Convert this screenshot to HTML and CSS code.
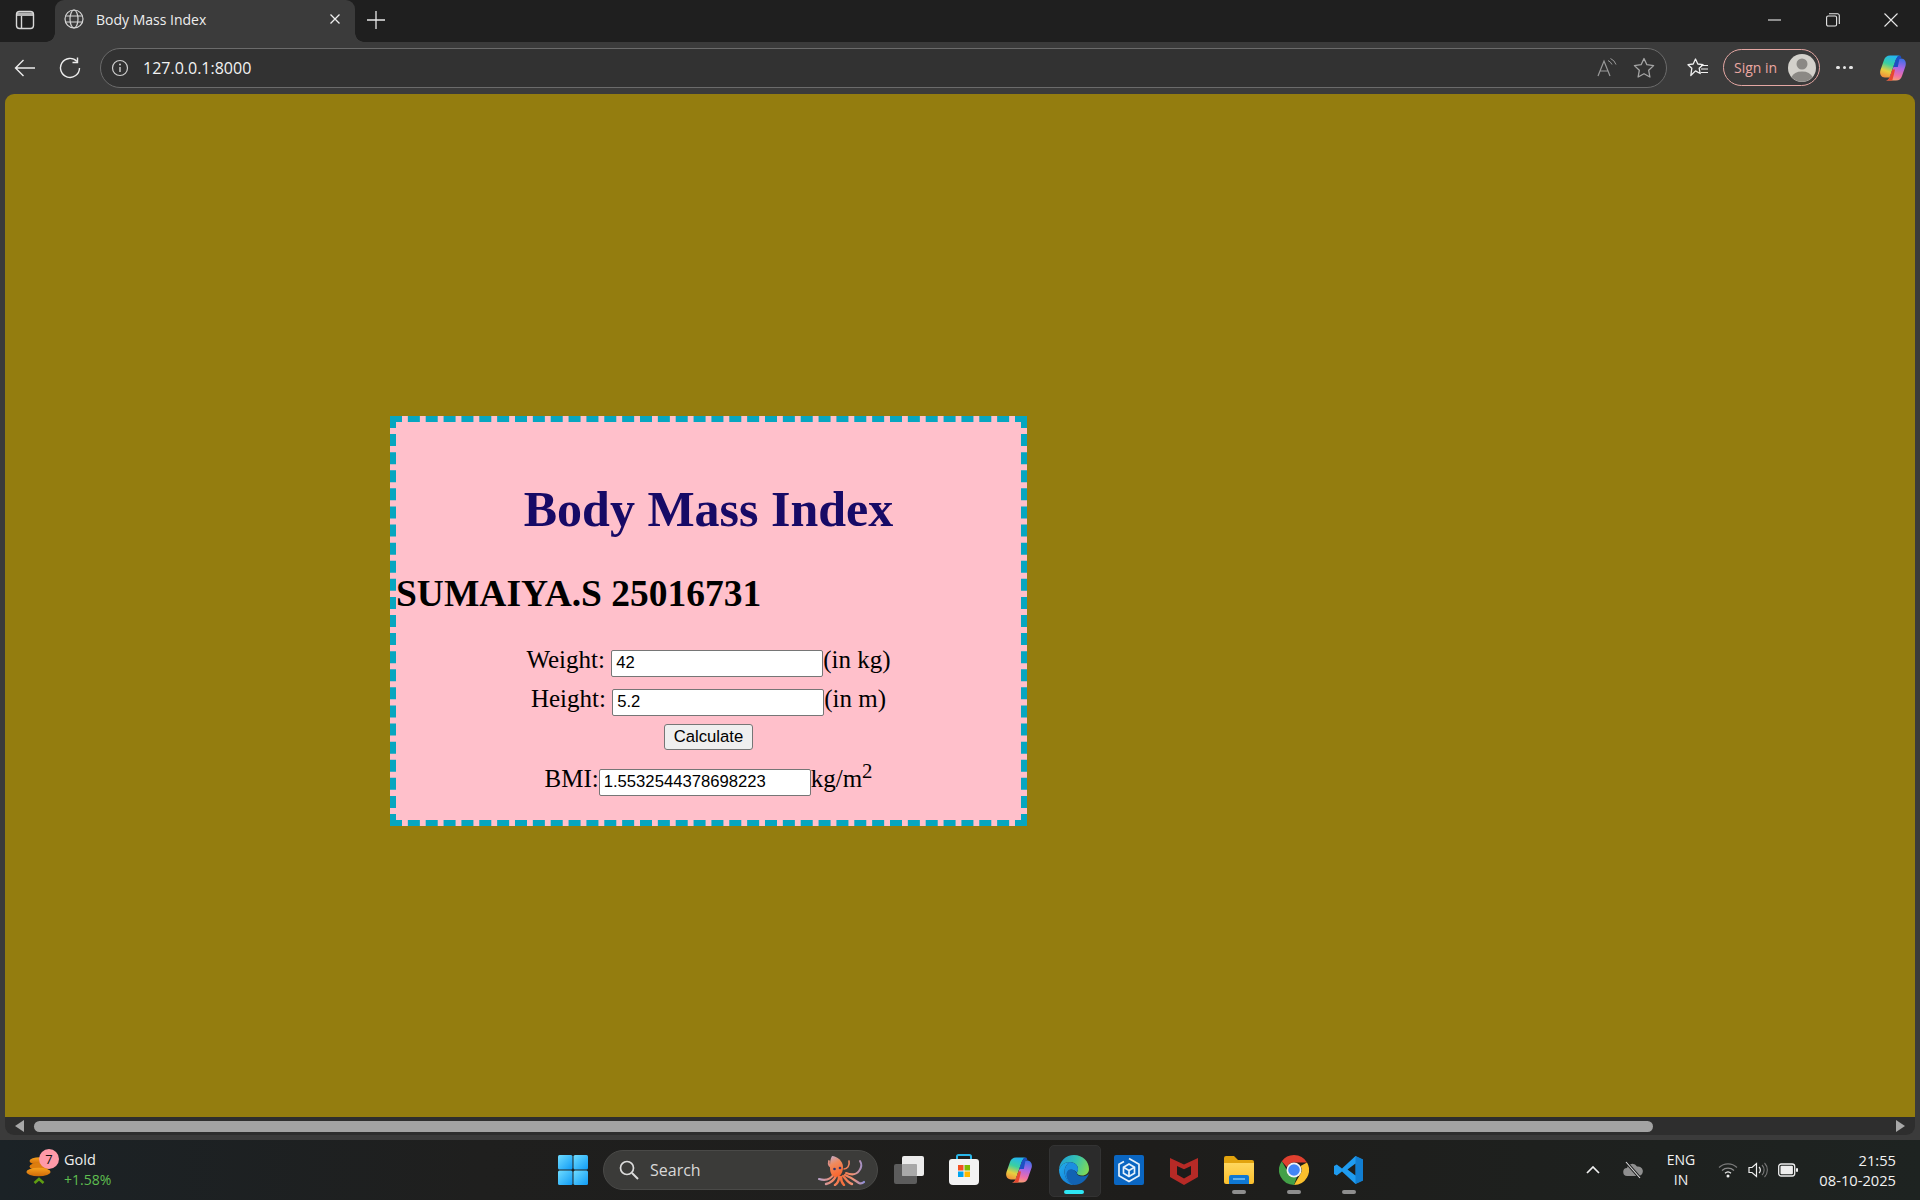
FILE: index.html
```html
<!DOCTYPE html>
<html lang="en">
<head>
<meta charset="utf-8">
<title>Body Mass Index</title>
<link rel="stylesheet" href="styles.css">
</head>
<body>
<svg class="defs" width="0" height="0" aria-hidden="true">
  <defs>
    <linearGradient id="copA" x1="0.6" y1="0" x2="0.3" y2="1"><stop offset="0" stop-color="#23b4f2"/><stop offset=".4" stop-color="#3ad0a0"/><stop offset=".72" stop-color="#e8cf3f"/><stop offset="1" stop-color="#f2913a"/></linearGradient>
    <linearGradient id="copB" x1="0.6" y1="0" x2="0.4" y2="1"><stop offset="0" stop-color="#3f6fe6"/><stop offset=".4" stop-color="#ac66e4"/><stop offset=".75" stop-color="#ee6fa6"/><stop offset="1" stop-color="#f8a271"/></linearGradient>
    <linearGradient id="winG" x1="0" y1="0" x2="1" y2="1"><stop offset="0" stop-color="#6fdcff"/><stop offset="1" stop-color="#0f9bf5"/></linearGradient>
    <linearGradient id="edgeA" x1="0" y1="0.3" x2="1" y2="0.6"><stop offset="0" stop-color="#1f9fd8"/><stop offset=".5" stop-color="#35c1b1"/><stop offset="1" stop-color="#7ed957"/></linearGradient>
    <linearGradient id="edgeB" x1="0" y1="0" x2="0.6" y2="1"><stop offset="0" stop-color="#22b0ee"/><stop offset="1" stop-color="#1680d8"/></linearGradient>
    <linearGradient id="coin" x1="0" y1="0" x2="0" y2="1"><stop offset="0" stop-color="#f7a11e"/><stop offset="1" stop-color="#cf6a08"/></linearGradient>
    <linearGradient id="folderG" x1="0" y1="0" x2="0" y2="1"><stop offset="0" stop-color="#ffd75e"/><stop offset="1" stop-color="#fbbf2c"/></linearGradient>
    <linearGradient id="armL" gradientUnits="userSpaceOnUse" x1="2" y1="0" x2="22" y2="0"><stop offset="0" stop-color="#b9a0c4"/><stop offset=".6" stop-color="#f08a6c"/><stop offset="1" stop-color="#f5713f"/></linearGradient>
    <linearGradient id="armR" gradientUnits="userSpaceOnUse" x1="46" y1="0" x2="24" y2="0"><stop offset="0" stop-color="#8f8fd8"/><stop offset=".5" stop-color="#f0947a"/><stop offset="1" stop-color="#f5713f"/></linearGradient>
    <linearGradient id="octoHead" gradientUnits="userSpaceOnUse" x1="13" y1="1" x2="22" y2="20"><stop offset="0" stop-color="#c3a9c6"/><stop offset=".4" stop-color="#f08a5c"/><stop offset="1" stop-color="#f9662f"/></linearGradient>
    <g id="copilotIcon">
      <path d="M11 1.500c-3 0-5 1.500-6 4.500L1.500 16c-1.300 4 .8 7.500 4.500 7.500h4.500L16 8c1-3 2.500-6.500 5-6.500z" fill="url(#copA)"/>
      <path d="M17 26.500c3 0 5-1.500 6-4.500l3.500-10c1.300-4-.8-7.500-4.500-7.500h-4.500L12 20c-1 3-2.500 6.500-5 6.500z" fill="url(#copB)"/>
      <path d="M21 1.500c-2.500 0-4 3.500-5 6.500l-1.700 5h4.500L20.500 4.500h2c-.4-1.800-1-3-1.500-3z" fill="#1d4fc4"/>
      <path d="M7 26.500c2.500 0 4-3.500 5-6.500l1.300-4.500h2.700L15 20c-.8 2.800-1.500 6.500-2 6.500z" fill="#e8472f"/>
    </g>
  </defs>
</svg>
<div class="screen">
  <header class="tabstrip">
    <svg class="ts-side" viewBox="0 0 20 20" width="20" height="20"><rect x="1.500" y="1.500" width="17" height="17" rx="3" fill="none" stroke="#d8d8d8" stroke-width="1.400"/><path d="M2 2.500h16v3.500H2z" fill="#d8d8d8" opacity=".8"/><path d="M6.500 6v12.500" fill="none" stroke="#d8d8d8" stroke-width="1.400"/></svg>
    <div class="tab">
      <svg viewBox="0 0 20 20" width="20" height="20"><g fill="none" stroke="#d5d5d5" stroke-width="1.200"><circle cx="10" cy="10" r="9"/><ellipse cx="10" cy="10" rx="4" ry="9"/><path d="M1.500 7h17M1.500 13h17"/></g></svg>
      <span class="tab-title">Body Mass Index</span>
      <svg class="tab-close" viewBox="0 0 12 12" width="12" height="12"><path d="M1.500 1.500l9 9M10.500 1.500l-9 9" stroke="#f0f0f0" stroke-width="1.300" fill="none"/></svg>
    </div>
    <svg class="ts-new" viewBox="0 0 18 18" width="18" height="18"><path d="M9 0v18M0 9h18" stroke="#e8e8e8" stroke-width="1.300" fill="none"/></svg>
    <div class="winctl">
      <svg viewBox="0 0 14 14" width="14" height="14"><path d="M0 7h13" stroke="#e8e8e8" stroke-width="1.100"/></svg>
      <svg viewBox="0 0 14 14" width="14" height="14"><rect x=".6" y="3" width="10" height="10" rx="1.500" fill="none" stroke="#e8e8e8" stroke-width="1.100"/><path d="M3 .8h8.500a1.800 1.800 0 0 1 1.800 1.800V11" fill="none" stroke="#e8e8e8" stroke-width="1.100"/></svg>
      <svg viewBox="0 0 14 14" width="14" height="14"><path d="M.5.500l13 13M13.500.5l-13 13" stroke="#e8e8e8" stroke-width="1.100" fill="none"/></svg>
    </div>
  </header>

  <nav class="toolbar">
    <svg class="tb-back" viewBox="0 0 22 18" width="22" height="18"><path d="M21 9H1.500M9.500 1L1.500 9l8 8" fill="none" stroke="#ececec" stroke-width="1.400"/></svg>
    <svg class="tb-reload" viewBox="0 0 22 22" width="22" height="22"><path d="M18 4.500A9.500 9.500 0 1 0 20.500 11" fill="none" stroke="#ececec" stroke-width="1.400"/><path d="M18.500 0.500v5h-5" fill="none" stroke="#ececec" stroke-width="1.400"/></svg>
    <div class="addr">
      <svg viewBox="0 0 18 18" width="18" height="18"><circle cx="9" cy="9" r="7.500" fill="none" stroke="#cfcfcf" stroke-width="1.200"/><path d="M9 8v5" stroke="#cfcfcf" stroke-width="1.400"/><circle cx="9" cy="5.500" r="1" fill="#cfcfcf"/></svg>
      <span class="addr-url">127.0.0.1:8000</span>
      <svg class="addr-read" viewBox="0 0 20 20" width="20" height="20"><path d="M1 18L7 3l6 15M3.300 13h7.500" fill="none" stroke="#9a9a9a" stroke-width="1.200"/><path d="M11 2.500a8 8 0 0 1 4 4M13.500 0.500a10 10 0 0 1 5.500 6" fill="none" stroke="#9a9a9a" stroke-width="1"/></svg>
      <svg class="addr-star" viewBox="0 0 22 22" width="22" height="22"><path d="M11 1.500l2.900 6.200 6.700.9-4.900 4.700 1.200 6.700-5.900-3.300-5.900 3.300 1.200-6.700-4.900-4.700 6.700-.9z" fill="none" stroke="#a5a5a5" stroke-width="1.300" stroke-linejoin="round"/></svg>
    </div>
    <svg class="tb-fav" viewBox="0 0 22 20" width="22" height="20"><path d="M8.500 1l2.300 5 5.200.7-3.800 3.600 1 5.200-4.700-2.600-4.700 4.600 1-7.200L1 6.700 6.200 6z" fill="none" stroke="#f0f0f0" stroke-width="1.300" stroke-linejoin="round"/><path d="M14 7.500h7M14 11h7M14 14.500h7" stroke="#f0f0f0" stroke-width="1.200"/></svg>
    <div class="signin">
      <span>Sign in</span>
      <svg viewBox="0 0 28 28" width="28" height="28"><circle cx="14" cy="14" r="14" fill="#d3d1cb"/><circle cx="14" cy="10" r="5.500" fill="#8b8985"/><path d="M3.500 23a11 8 0 0 1 21 0a14 14 0 0 1-21 0z" fill="#8b8985"/></svg>
    </div>
    <div class="more"><i></i><i></i><i></i></div>
    <svg class="tb-copilot" viewBox="0 0 28 28" width="28" height="28"><use href="#copilotIcon"/></svg>
  </nav>

  <div class="frame">
    <main class="viewport">
      <section class="card">
        <h1>Body Mass Index</h1>
        <h2>SUMAIYA.S 25016731</h2>
        <form class="bmi-form">
          <div class="row">Weight: <input type="text" value="42" class="field">(in kg)</div>
          <div class="row">Height: <input type="text" value="5.2" class="field">(in m)</div>
          <div class="row row-btn"><button type="button" class="calc">Calculate</button></div>
          <div class="row row-bmi">BMI:<input type="text" value="1.5532544378698223" class="field">kg/m<sup>2</sup></div>
        </form>
      </section>
    </main>
    <div class="hscroll">
      <span class="arrow arrow-l"></span>
      <div class="track"><div class="thumb"></div></div>
      <span class="arrow arrow-r"></span>
    </div>
  </div>

  <footer class="taskbar">
    <div class="widget">
      <div class="widget-icon">
        <svg viewBox="0 0 26 32" width="26" height="32">
          <ellipse cx="14" cy="6" rx="10.500" ry="3.800" fill="url(#coin)"/>
          <ellipse cx="14" cy="11.500" rx="10.500" ry="3.800" fill="#dd7d0e"/>
          <ellipse cx="12.500" cy="17" rx="12" ry="4.200" fill="url(#coin)"/>
          <path d="M8.500 28l4.500-4 4.500 4" fill="none" stroke="#5f9d12" stroke-width="2.600"/>
        </svg>
        <span class="badge">7</span>
      </div>
      <div class="widget-text">
        <span class="w-name">Gold</span>
        <span class="w-val">+1.58%</span>
      </div>
    </div>

    <div class="tb-item">
      <svg viewBox="0 0 30 30" width="30" height="30"><g fill="url(#winG)"><rect x="0" y="0" width="14.500" height="14.500" rx="1.500"/><rect x="15.500" y="0" width="14.500" height="14.500" rx="1.500"/><rect x="0" y="15.500" width="14.500" height="14.500" rx="1.500"/><rect x="15.500" y="15.500" width="14.500" height="14.500" rx="1.500"/></g></svg>
    </div>

    <div class="search">
      <svg viewBox="0 0 20 20" width="20" height="20"><circle cx="8" cy="8" r="6.500" fill="none" stroke="#dcdcdc" stroke-width="1.700"/><path d="M13 13l6 6" stroke="#dcdcdc" stroke-width="2"/></svg>
      <span>Search</span>
      <svg class="octo" viewBox="0 0 47 31" width="47" height="31">
        <g fill="none" stroke-linecap="round" stroke="url(#armR)">
          <path d="M26 14c3 0 6-3 5-8" stroke-width="1.600"/>
          <path d="M28 18c5 2 10 2 13-2s3-7 1-10" stroke-width="2"/>
          <path d="M27 20c5 2 10 5 14 8 2 1 4 0 5-1" stroke-width="2.200"/>
          <path d="M25 21c3 3 5 7 9 8" stroke-width="2.400"/>
        </g>
        <g fill="none" stroke-linecap="round" stroke="url(#armL)">
          <path d="M15 13c-3-1-5-3-4-7" stroke-width="1.800"/>
          <path d="M16 19c-3 5-8 7-15 5" stroke-width="2.200"/>
          <path d="M18 21c-2 4-5 7-10 8" stroke-width="2.400"/>
          <path d="M21 22c0 3-1 6-4 8" stroke-width="2.400"/>
          <path d="M23 22c0 3 1 6 3 8" stroke-width="2.400"/>
        </g>
        <path d="M14 1c5 0 11 5 11 11 0 6-3 10-7 10s-6-4-6-9c0-5 0-9 2-12z" fill="url(#octoHead)"/>
        <circle cx="16.500" cy="14" r="1.300" fill="#35356a"/><circle cx="22" cy="13" r="1.300" fill="#35356a"/>
      </svg>
    </div>

    <div class="tb-item">
      <svg viewBox="0 0 30 28" width="30" height="28"><rect x="0" y="8" width="23" height="20" rx="2" fill="#5c5c5c"/><rect x="8" y="0" width="22" height="20" rx="2" fill="#ececec"/><rect x="8" y="8" width="15" height="12" rx="1" fill="#a9a9a9"/></svg>
    </div>
    <div class="tb-item">
      <svg viewBox="0 0 30 32" width="30" height="32"><path d="M8 6V2.500a1.500 1.500 0 0 1 1.500-1.500h11A1.500 1.500 0 0 1 22 2.500V6" fill="none" stroke="#29b6e8" stroke-width="2"/><path d="M0 8a3 3 0 0 1 3-3h24a3 3 0 0 1 3 3v19a4 4 0 0 1-4 4H4a4 4 0 0 1-4-4z" fill="#f3f3f3"/><rect x="9" y="11" width="5.500" height="5.500" fill="#f25022"/><rect x="15.500" y="11" width="5.500" height="5.500" fill="#7fba00"/><rect x="9" y="17.500" width="5.500" height="5.500" fill="#00a4ef"/><rect x="15.500" y="17.500" width="5.500" height="5.500" fill="#ffb900"/></svg>
    </div>
    <div class="tb-item">
      <svg viewBox="0 0 28 28" width="28" height="28"><use href="#copilotIcon"/></svg>
    </div>
    <div class="tb-item tb-active">
      <svg viewBox="0 0 32 32" width="32" height="32">
        <path d="M1 15.500C1.500 7 8 1 16 1c9 0 15 6.500 15 14 0 4-3 6.500-7 6.500-3 0-5-1-5-2.800 0-1 1-1.700 1-3.700 0-4-3.700-7-8.500-7C7 8 3 11 1 15.500z" fill="url(#edgeA)"/>
        <path d="M1 15.500C3 11 7 8 11.500 8c-3 2.500-5 5.500-5 9.500 0 6 4 11.500 9.500 13.500C7.500 31 .8 24 1 15.500z" fill="url(#edgeB)"/>
        <path d="M6.500 17.500C6.500 13.500 8.500 10.500 11.500 8c4.800 0 8.500 3 8.500 7 0 2-1 2.700-1 3.700-3.500-4-8-3.500-9.500-.2-1.500 4 1 9.500 6.500 12.500C10.500 29 6.500 23.500 6.500 17.500z" fill="#1b8fe0"/>
        <path d="M10.500 16c2.500-1.500 6-.5 8.200 3 .3 2.300 3.300 3.700 6.800 3.300 2.500-.3 4.500-1.300 5.500-2.800-2 6-7.500 11.500-15 11.500-6-2.500-9-9-7-13 .3-.8.800-1.500 1.500-2z" fill="#1263b3"/>
      </svg>
      <i class="run run-on"></i>
    </div>
    <div class="tb-item">
      <svg viewBox="0 0 30 30" width="30" height="30"><rect width="30" height="30" rx="2" fill="#0a66c2"/><g fill="none" stroke="#e6f1fb" stroke-width="1.700"><path d="M15 3.500l10 5.800v11.400L15 26.500 5 20.700V9.300l5-2.900"/><path d="M15 9l5.500 3.200v6L15 21.400l-5.500-3.200v-6z"/><path d="M9.500 12.200L15 15.400l5.500-3.200M15 15.400v6"/></g></svg>
    </div>
    <div class="tb-item">
      <svg viewBox="0 0 28 30" width="28" height="30"><path d="M0 3l14 6.500L28 3v19l-14 8-14-8z" fill="#b62a26"/><path d="M7 11l7 3.300 7-3.300v8.500l-7 4-7-4z" fill="#1c1b1a"/></svg>
    </div>
    <div class="tb-item">
      <svg viewBox="0 0 30 28" width="30" height="28"><path d="M0 2a2 2 0 0 1 2-2h8l4 4h14a2 2 0 0 1 2 2v2H0z" fill="#e2a30d"/><path d="M0 7h30v19a2 2 0 0 1-2 2H2a2 2 0 0 1-2-2z" fill="url(#folderG)"/><path d="M5 28v-7a2 2 0 0 1 2-2h16a2 2 0 0 1 2 2v7z" fill="#0f78d4"/><path d="M9 23h12" stroke="#7fc4f5" stroke-width="1.500"/></svg>
      <i class="run"></i>
    </div>
    <div class="tb-item">
      <svg viewBox="0 0 30 30" width="30" height="30"><path d="M15 0a15 15 0 0 1 13 7.500H15a7.500 7.500 0 0 0-7 4.800L2.800 6.300A15 15 0 0 1 15 0z" fill="#e0402f"/><path d="M28 7.500A15 15 0 0 1 15 30l6.500-11.200A7.500 7.500 0 0 0 21.500 11z" fill="#fbc02d"/><path d="M15 30A15 15 0 0 1 2.800 6.300L9.400 17.800a7.500 7.500 0 0 0 8.600 4z" fill="#43a047"/><circle cx="15" cy="15" r="7.500" fill="#f1f3f4"/><circle cx="15" cy="15" r="5.800" fill="#4285f4"/></svg>
      <i class="run"></i>
    </div>
    <div class="tb-item">
      <svg viewBox="0 0 30 30" width="30" height="30"><path d="M21.500 1L29 4.500v21L21.500 29 8 16.500 2.800 20.500 0 19V11l2.800-1.500L8 13.500zM21.500 8.500l-8 6 8 6z" fill="#1f9cf0"/><path d="M21.500 1L29 4.500v21L21.500 29z" fill="#0a6fc0" opacity=".65"/></svg>
      <i class="run"></i>
    </div>

    <div class="tray">
      <svg class="tr-chev" viewBox="0 0 14 8" width="14" height="8"><path d="M1 7l6-6 6 6" fill="none" stroke="#f0f0f0" stroke-width="1.700"/></svg>
      <svg class="tr-cloud" viewBox="0 0 20 18" width="20" height="18"><path d="M4.500 15a4 4 0 0 1-.5-8 5.500 5.500 0 0 1 10-1.500 4.500 4.500 0 0 1 2 9.500z" fill="#8f8f8f"/><path d="M3 1l14 16" stroke="#1f2020" stroke-width="3"/><path d="M3 1l14 16" stroke="#e0e0e0" stroke-width="1.100"/></svg>
      <div class="lang"><span>ENG</span><span>IN</span></div>
      <svg class="tr-wifi" viewBox="0 0 20 16" width="20" height="16"><path d="M1 5.500a13 13 0 0 1 18 0" fill="none" stroke="#7a7a7a" stroke-width="1.200"/><path d="M4 8.500a9 9 0 0 1 12 0" fill="none" stroke="#8a8a8a" stroke-width="1.200"/><path d="M7 11.300a4.500 4.500 0 0 1 6 0" fill="none" stroke="#eee" stroke-width="1.200"/><circle cx="10" cy="14" r="1.500" fill="#eee"/></svg>
      <svg class="tr-vol" viewBox="0 0 20 16" width="20" height="16"><path d="M1 5.500h3L8.500 1.500v13L4 10.500H1z" fill="none" stroke="#eee" stroke-width="1.200"/><path d="M11 5a4 4 0 0 1 0 6" fill="none" stroke="#eee" stroke-width="1.200"/><path d="M14 3a7 7 0 0 1 0 10M16.500 1a10 10 0 0 1 0 14" fill="none" stroke="#777" stroke-width="1.100"/></svg>
      <svg class="tr-bat" viewBox="0 0 20 14" width="20" height="14"><rect x=".7" y="1" width="16" height="12" rx="2.500" fill="none" stroke="#eee" stroke-width="1.300"/><rect x="2.500" y="2.800" width="12.400" height="8.400" rx="1" fill="#eee"/><rect x="18" y="5" width="2" height="4" rx="1" fill="#eee"/></svg>
      <div class="clock"><span>21:55</span><span>08-10-2025</span></div>
    </div>
  </footer>
</div>
</body>
</html>
```
FILE: styles.css
```css
* { box-sizing: border-box; }
html, body { margin: 0; height: 100%; overflow: hidden; }
body { background: #1f1f1f; font-family: "Open Sans", "Noto Sans", sans-serif; }
.defs { position: absolute; }
.screen { width: 1920px; height: 1200px; display: flex; flex-direction: column; }
svg { display: block; flex: none; }

/* tab strip */
.tabstrip { height: 42px; flex: none; background: #1f1f1f; display: flex; align-items: center; padding-left: 15px; padding-bottom: 2px; }
.tab { width: 300px; height: 42px; margin: 0 0 0 20px; background: #3b3b3b; border-radius: 9px 9px 0 0; display: flex; align-items: center; padding: 0 14px 4px 9px; position: relative; align-self: flex-start; }
.tab::before, .tab::after { content: ""; position: absolute; bottom: 0; width: 9px; height: 9px; }
.tab::before { left: -9px; background: radial-gradient(circle at 0 0, transparent 8.500px, #3b3b3b 9px); }
.tab::after { right: -9px; background: radial-gradient(circle at 100% 0, transparent 8.500px, #3b3b3b 9px); }
.tab-title { margin-left: 12px; font-size: 14px; color: #eee; flex: 1; }
.ts-new { margin-left: 12px; }
.winctl { margin-left: auto; display: flex; gap: 44px; padding-right: 22px; }

/* toolbar */
.toolbar { height: 52px; flex: none; background: #3b3b3b; display: flex; align-items: center; padding: 0 13px 1px 14px; }
.tb-reload { margin-left: 23px; }
.addr { width: 1567px; height: 40px; margin-left: 19px; border: 1px solid #6b6b6b; border-radius: 20px; background: #323232; display: flex; align-items: center; padding: 0 11px 0 10px; }
.addr-url { margin-left: 14px; font-size: 16px; color: #f2f2f2; flex: 1; }
.addr-star { margin-left: 16px; }
.tb-fav { margin-left: 20px; }
.signin { width: 97px; height: 37px; margin-left: 14px; border: 1.500px solid #e4a7a3; border-radius: 19px; display: flex; align-items: center; justify-content: space-between; padding: 0 3px 0 10px; color: #eaa7a2; font-size: 14px; }
.more { display: flex; gap: 3px; margin-left: 16px; }
.more i { width: 3.500px; height: 3.500px; border-radius: 50%; background: #e6e6e6; }
.tb-copilot { margin-left: 26px; }

/* browser content */
.frame { flex: 1; min-height: 0; background: #3b3b3b; padding: 0 5px 5px; display: flex; flex-direction: column; }
.viewport { flex: 1; min-height: 0; background: #947d0f; border-radius: 9px 9px 0 0; padding: 322px 0 0 385px; overflow: hidden; }
.hscroll { height: 18px; flex: none; background: #2e2e2e; border-radius: 0 0 9px 9px; display: flex; align-items: center; padding: 0 10px; }
.track { flex: 1; margin: 0 10px 0 10px; height: 11px; }
.thumb { width: 1619px; height: 11px; background: #a3a3a3; border-radius: 6px; }
.arrow { width: 0; height: 0; border-top: 6px solid transparent; border-bottom: 6px solid transparent; }
.arrow-l { border-right: 9px solid #a8a8a8; }
.arrow-r { border-left: 9px solid #a8a8a8; }

/* card */
.card { width: 637px; height: 410px; border: 6px dashed #06a6c0; background: #ffc0cb; padding-top: 25px; font-family: "Liberation Serif", "Times New Roman", serif; font-size: 25px; color: #000; }
.card h1 { margin: 33px 0 34px; font-size: 50px; line-height: 58px; color: #170a66; text-align: center; }
.card h2 { margin: 0 0 30px; font-size: 37.500px; line-height: 43px; }
.row { height: 39px; line-height: 29px; text-align: center; white-space: nowrap; }
.row-btn { height: 43px; line-height: 26px; margin-top: -2px; }
.row-bmi { margin-top: 0; }
.field { width: 212px; height: 27px; padding: 1px 4px; border: 1px solid #767676; border-radius: 2px; background: #fff; font: 16.670px "Liberation Sans", Arial, sans-serif; color: #000; vertical-align: baseline; outline: none; }
.calc { width: 89px; height: 26px; padding: 0; border: 1px solid #767676; border-radius: 3px; background: #efefef; font: 16.670px "Liberation Sans", Arial, sans-serif; color: #000; }
.row sup { font-size: 20.800px; line-height: 0; }

/* taskbar */
.taskbar { height: 60px; flex: none; display: flex; align-items: center; background: linear-gradient(90deg, #1b2226 0%, #1f1f1e 25%, #1e1d1b 60%, #1e2321 100%); }
.widget { width: 545px; flex: none; display: flex; align-items: center; padding-left: 26px; }
.widget-icon { position: relative; width: 26px; height: 32px; margin-top: 2px; }
.badge { position: absolute; left: 13px; top: -6px; width: 20px; height: 20px; border-radius: 50%; background: #ff9aa8; color: #111; font-size: 13px; line-height: 20px; text-align: center; }
.widget-text { margin-left: 12px; display: flex; flex-direction: column; font-size: 14px; line-height: 20px; }
.w-name { color: #eee; font-size: 14.500px; }
.w-val { color: #5fbf50; }
.tb-item { width: 55px; height: 50px; flex: none; display: flex; align-items: center; justify-content: center; position: relative; }
.tb-active::before { content: ""; position: absolute; left: 2.500px; width: 50px; height: 50px; top: 0; background: #2b2b2b; border: 1px solid #333; border-radius: 5px; }
.tb-active svg { position: relative; }
.run { position: absolute; left: 20.500px; bottom: 1px; width: 14px; height: 4px; border-radius: 2px; background: #8e8e8e; }
.run-on { left: 17.500px; width: 20px; background: #2ee6f4; }
.search { width: 275px; height: 40px; margin: 0 3px; flex: none; border: 1px solid #4a4a48; border-radius: 20px; background: #3b3b39; display: flex; align-items: center; padding: 0 12px 0 15px; color: #d8d8d8; font-size: 16px; }
.search span { margin-left: 11px; flex: 1; }
.tray { margin-left: auto; display: flex; align-items: center; padding-right: 24px; color: #f2f2f2; font-size: 14px; }
.tr-cloud { margin-left: 23px; }
.lang { margin-left: 20px; width: 36px; display: flex; flex-direction: column; align-items: center; line-height: 20px; }
.tr-wifi { margin-left: 19px; }
.tr-vol { margin-left: 10px; }
.tr-bat { margin-left: 10px; }
.clock { width: 98px; display: flex; flex-direction: column; align-items: flex-end; line-height: 20px; font-size: 14.700px; }
```
